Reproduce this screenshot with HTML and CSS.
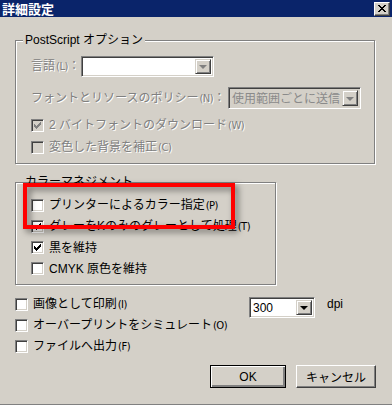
FILE: index.html
```html
<!DOCTYPE html>
<html lang="ja">
<head>
    <meta charset="UTF-8">
    <title>詳細設定</title>
    <link rel="stylesheet" href="styles.css">
</head>
<body>

<div class="titlebar">
    <span class="title">詳細設定</span>
    <span class="close">
        <svg width="8" height="7" viewBox="0 0 8 7" shape-rendering="crispEdges">
            <path d="M0 0h2v1h-2zM6 0h2v1h-2zM1 1h2v1h-2zM5 1h2v1h-2zM2 2h4v1h-4zM3 3h2v1h-2zM2 4h4v1h-4zM1 5h2v1h-2zM5 5h2v1h-2zM0 6h2v1h-2zM6 6h2v1h-2z" fill="#000"/>
        </svg>
    </span>
</div>

<div class="dialog">
    <div class="group ps">
        <span class="legend">PostScript オプション</span>

        <div class="row r-lang">
            <span class="label disabled lang-label">言語<span class="key">(L)</span>：</span>
            <span class="combo combo-lang"><span class="combo-text"></span><span class="drop off"><i></i></span></span>
        </div>

        <div class="row r-policy">
            <span class="label disabled policy-label">フォントとリソースのポリシー<span class="key">(N)</span>：</span>
            <span class="combo combo-policy inactive"><span class="combo-text">使用範囲ごとに送信</span><span class="drop off"><i></i></span></span>
        </div>

        <label class="check disabled r-dl">
            <span class="box checked"><svg width="7" height="7" viewBox="0 0 7 7" shape-rendering="crispEdges"><polygon points="0,2 2,4 6,0 7,0 7,3 2,7 0,5" /></svg></span>
            <span>2 バイトフォントのダウンロード<span class="key">(W)</span></span>
        </label>
        <label class="check disabled r-bg">
            <span class="box"></span>
            <span>変色した背景を補正<span class="key">(C)</span></span>
        </label>
    </div>

    <div class="group cm">
        <span class="legend plain">カラーマネジメント</span>

        <label class="check row21 first">
            <span class="box"></span>
            <span>プリンターによるカラー指定<span class="key">(P)</span></span>
        </label>
        <label class="check row21">
            <span class="box"><svg width="7" height="7" viewBox="0 0 7 7" shape-rendering="crispEdges"><polygon points="0,2 2,4 6,0 7,0 7,3 2,7 0,5" /></svg></span>
            <span>グレーをKのみのグレーとして処理<span class="key">(T)</span></span>
        </label>
        <label class="check row21">
            <span class="box"><svg width="7" height="7" viewBox="0 0 7 7" shape-rendering="crispEdges"><polygon points="0,2 2,4 6,0 7,0 7,3 2,7 0,5" /></svg></span>
            <span>黒を維持</span>
        </label>
        <label class="check row21">
            <span class="box"></span>
            <span>CMYK 原色を維持</span>
        </label>

        <!-- annotation frame drawn over the dialog -->
        <div class="mark"></div>
    </div>

    <div class="bottom">
        <div class="checks">
            <label class="check row21">
                <span class="box"></span>
                <span>画像として印刷<span class="key">(I)</span></span>
            </label>
            <label class="check row21">
                <span class="box"></span>
                <span>オーバープリントをシミュレート<span class="key">(O)</span></span>
            </label>
            <label class="check row21">
                <span class="box"></span>
                <span>ファイルへ出力<span class="key">(F)</span></span>
            </label>
        </div>
        <span class="combo combo-dpi"><span class="combo-text">300</span><span class="drop"><i></i></span></span>
        <span class="dpi">dpi</span>
    </div>

    <div class="buttons">
        <button class="btn default">OK</button>
        <button class="btn cancel">キャンセル</button>
    </div>
</div>

</body>
</html>
```

FILE: styles.css
```css
html, body {
    margin: 0;
    padding: 0;
}
body {
    width: 392px;
    height: 405px;
    box-sizing: border-box;
    overflow: hidden;
    background-color: #d4d0c8;
    border-bottom: 1px solid #808080;
    font-family: "Liberation Sans", "Noto Sans CJK JP", sans-serif;
    font-size: 12px;
    line-height: 14px;
    color: #000;
}
.titlebar {
    height: 17px;
    background-color: #0a246a;
    display: flex;
    align-items: center;
    justify-content: space-between;
}
.title {
    color: #fff;
    font-family: "Noto Sans CJK JP", sans-serif;
    font-weight: bold;
    font-size: 13px;
    margin-left: 2px;
}
.close {
    width: 16px;
    height: 14px;
    box-sizing: border-box;
    margin-right: 2px;
    display: flex;
    align-items: center;
    justify-content: center;
    background-color: #d4d0c8;
    border: 1px solid;
    border-color: #fff #404040 #404040 #fff;
    box-shadow: inset -1px -1px 0 #808080;
}
.dialog {
    padding: 0 17px 0 15px;
}
.group {
    position: relative;
    border: 1px solid #808080;
    box-shadow: 1px 1px 0 #fff, inset 1px 1px 0 #fff;
    padding: 0 0 0 15px;
}
.group.ps {
    margin-top: 23px;
    padding-bottom: 7px;
}
.group.cm {
    width: 261px;
    box-sizing: border-box;
    margin-top: 18px;
    padding-bottom: 5px;
}
.legend {
    display: table;
    margin: -8px 0 0 -8px;
    padding: 0 2px;
    line-height: 15px;
    background-color: #d4d0c8;
}
.legend.plain {
    background-color: transparent;
}
.key {
    font-family: "DejaVu Sans", sans-serif;
    font-size: 10px;
    letter-spacing: -0.5px;
    margin-left: 1px;
}
.disabled {
    color: #808080;
    text-shadow: 1px 1px 0 #fff;
}
.row {
    display: flex;
    align-items: center;
}
.r-lang {
    height: 21px;
    margin-top: 8px;
}
.r-policy {
    height: 22px;
    margin-top: 10px;
}
.lang-label {
    width: 50px;
}
.policy-label {
    width: 197px;
}

/* combo boxes */
.combo {
    display: flex;
    box-sizing: border-box;
    background-color: #fff;
    border: 1px solid;
    border-color: #808080 #fff #fff #808080;
    box-shadow: inset 1px 1px 0 #404040, inset -1px -1px 0 #d4d0c8;
    padding: 2px;
}
.combo-text {
    flex: 1;
    display: flex;
    align-items: center;
    padding-left: 2px;
    overflow: hidden;
    white-space: nowrap;
}
.combo-lang {
    width: 133px;
    height: 21px;
}
.combo-policy {
    width: 133px;
    height: 22px;
}
.combo.inactive {
    background-color: #d4d0c8;
}
.combo.inactive .combo-text {
    color: #8a8a8a;
    font-family: "Noto Sans CJK JP", sans-serif;
    padding-left: 1px;
}
.combo-dpi {
    width: 66px;
    height: 21px;
    margin-top: 3px;
}
.combo-dpi .combo-text {
    padding-left: 1px;
}
.drop {
    width: 16px;
    box-sizing: border-box;
    background-color: #d4d0c8;
    border: 1px solid;
    border-color: #d4d0c8 #404040 #404040 #d4d0c8;
    box-shadow: inset 1px 1px 0 #fff, inset -1px -1px 0 #808080;
    display: flex;
    align-items: center;
    justify-content: center;
}
.drop i {
    width: 0;
    height: 0;
    border-left: 4px solid transparent;
    border-right: 4px solid transparent;
    border-top: 4px solid #000;
    margin-top: 1px;
}
.drop.off i {
    border-top-color: #808080;
}

/* check boxes */
.check {
    display: flex;
    align-items: center;
    gap: 5px;
    white-space: nowrap;
}
.r-dl {
    height: 18px;
    margin-top: 7px;
}
.r-bg {
    height: 18px;
    margin-top: 4px;
}
.row21 {
    height: 21px;
}
.row21.first {
    margin-top: 5px;
}
.box {
    width: 13px;
    height: 13px;
    flex: none;
    box-sizing: border-box;
    background-color: #fff;
    border: 1px solid;
    border-color: #808080 #fff #fff #808080;
    box-shadow: inset 1px 1px 0 #404040, inset -1px -1px 0 #d4d0c8;
    display: flex;
    align-items: center;
    justify-content: center;
}
.box svg {
    fill: #000;
}
.disabled .box {
    background-color: #d4d0c8;
}
.disabled .box svg {
    fill: #808080;
}

.mark {
    position: absolute;
    left: 7px;
    top: 0;
    width: 212px;
    height: 46px;
    box-sizing: border-box;
    border: 4px solid #ff0000;
    filter: drop-shadow(3px 3px 3px rgba(0, 0, 0, 0.5));
}

/* lower part */
.bottom {
    display: flex;
    align-items: flex-start;
    margin-top: 9px;
}
.checks {
    width: 234px;
}
.dpi {
    margin: 3px 0 0 12px;
}
.buttons {
    display: flex;
    justify-content: flex-end;
    gap: 10px;
    margin: 8px -1px 0 0;
}
.btn {
    height: 23px;
    box-sizing: border-box;
    padding: 0;
    font-family: "Liberation Sans", "Noto Sans CJK JP", sans-serif;
    font-size: 12px;
    color: #000;
    background-color: #d4d0c8;
    border: 1px solid;
    border-color: #fff #404040 #404040 #fff;
    box-shadow: inset -1px -1px 0 #808080;
}
.btn.default {
    width: 76px;
    border-color: #000;
    box-shadow: inset 1px 1px 0 #fff, inset -2px -2px 0 #808080, inset -1px -1px 0 #404040;
}
.btn.cancel {
    width: 80px;
}
```
